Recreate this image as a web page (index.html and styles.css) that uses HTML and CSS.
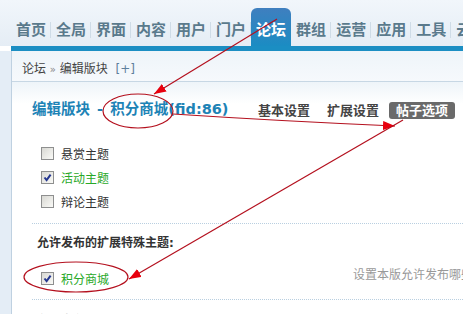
FILE: index.html
```html
<!DOCTYPE html>
<html lang="zh-CN">
<head>
  <meta charset="UTF-8" />
  <title>编辑版块 - 积分商城</title>
  <link rel="stylesheet" href="styles.css">
</head>
<body>
  <div class="page">
    <header class="top">
      <ul class="nav">
        <li><a>首页</a></li>
        <li><a>全局</a></li>
        <li><a>界面</a></li>
        <li><a>内容</a></li>
        <li><a>用户</a></li>
        <li><a>门户</a></li>
        <li class="on"><a>论坛</a></li>
        <li><a>群组</a></li>
        <li><a>运营</a></li>
        <li><a>应用</a></li>
        <li><a>工具</a></li>
        <li><a>云平台</a></li>
      </ul>
    </header>
    <div class="bar"></div>
    <div class="layout">
      <aside class="side"></aside>
      <main class="main">
        <div class="crumb">论坛 <em>»</em> 编辑版块 <span class="plus">[+]</span></div>
        <div class="content">
          <div class="head">
            <h3>编辑版块 <span class="dash">-</span> 积分商城(fid:86)</h3>
            <ul class="tabs">
              <li>基本设置</li>
              <li>扩展设置</li>
              <li class="cur">帖子选项</li>
            </ul>
          </div>
          <ul class="checks">
            <li><span class="box"></span>悬赏主题</li>
            <li class="checked"><span class="box"><svg viewBox="0 0 11 11"><path d="M2.5 5.5 L4.6 8.2 L8.6 2.6"/></svg></span>活动主题</li>
            <li><span class="box"></span>辩论主题</li>
          </ul>
          <div class="sect">
            <h4>允许发布的扩展特殊主题:</h4>
            <div class="opt checked"><span class="box"><svg viewBox="0 0 11 11"><path d="M2.5 5.5 L4.6 8.2 L8.6 2.6"/></svg></span>积分商城</div>
            <p class="tip">设置本版允许发布哪些扩展特殊主题</p>
          </div>
          <div class="sect next">
            <h4>允许发布的特殊主题默认:</h4>
          </div>
        </div>
      </main>
    </div>
    <!-- red annotations drawn over the screenshot -->
    <svg class="marks" width="463" height="314" viewBox="0 0 463 314">
      <defs>
        <marker id="arrow" markerUnits="userSpaceOnUse" markerWidth="13" markerHeight="9" refX="12" refY="4.5" orient="auto">
          <path d="M0,0 L12,4.5 L0,9 z" fill="#e8000e"/>
        </marker>
      </defs>
      <path d="M277,19 L154,94" marker-end="url(#arrow)"/>
      <ellipse cx="138" cy="111" rx="35" ry="17"/>
      <path d="M173,114 Q280,121 395,126" marker-end="url(#arrow)"/>
      <path d="M403,120 L129,279" marker-end="url(#arrow)"/>
      <ellipse cx="76" cy="277" rx="52" ry="15"/>
    </svg>
  </div>
</body>
</html>
```
FILE: styles.css
```css
body {
  margin: 0;
  font-family: "DejaVu Sans", "Noto Sans CJK SC", sans-serif;
  font-size: 12px;
  color: #333;
}
.page {
  position: relative;
  width: 463px;
  height: 314px;
  overflow: hidden;
  background: #fff;
}
.top {
  height: 46px;
  background: linear-gradient(#f1f6fb, #e5edf5);
  overflow: hidden;
}
.nav {
  display: flex;
  margin: 0;
  padding: 8px 0 0 11px;
  list-style: none;
  white-space: nowrap;
}
.nav li {
  display: flex;
  align-items: center;
  flex: none;
  height: 33px;
  padding-top: 5px;
}
.nav a {
  padding: 0 4px 0 5px;
  border-right: 1px solid #cfdce7;
  line-height: 16px;
  font-size: 15px;
  font-weight: bold;
  color: #5a7a8c;
}
.nav li.on {
  background: linear-gradient(#3f7fbf, #1b8cc3);
  border-radius: 6px 6px 0 0;
}
.nav li.on a {
  border-right: 0;
  padding-right: 5px;
  color: #fff;
}
.bar {
  height: 5px;
  margin-left: 11px;
  background: #1b8ec3;
}
.layout {
  display: flex;
  height: 263px;
}
.side {
  flex: none;
  width: 11px;
  background: #e4edf6;
  border-right: 1px solid #bfd1e1;
}
.main {
  flex: 1;
  min-width: 0;
}
.crumb {
  height: 31px;
  box-sizing: border-box;
  padding: 5px 0 0 10px;
  line-height: 26px;
  background: linear-gradient(#eef4f9, #f6f9fc);
  border-bottom: 1px solid #c7d7e4;
  color: #444;
}
.crumb em {
  font-style: normal;
  color: #888;
  font-size: 10px;
}
.crumb .plus {
  margin-left: 4px;
  color: #5d7f9c;
}
.content {
  padding-left: 20px;
  background: linear-gradient(#eef4f9, #fff 22px);
}
.head {
  display: flex;
  justify-content: space-between;
  align-items: center;
  padding: 17px 8px 0 0;
}
.head h3 {
  margin: 0;
  font-size: 14.5px;
  line-height: 20px;
  color: #1d83b6;
  white-space: nowrap;
}
.head .dash {
  margin: 0 2px;
}
.tabs {
  display: flex;
  flex: none;
  margin: 2px 0 0;
  padding: 0;
  list-style: none;
}
.tabs li {
  margin-left: 3px;
  padding: 0 7px;
  line-height: 17px;
  font-size: 13px;
  font-weight: bold;
  color: #444;
}
.tabs li.cur {
  background: #6a6a6a;
  color: #fff;
  border-radius: 3px;
}
.checks {
  margin: 22px 0 0 9px;
  padding: 0 0 10px;
  list-style: none;
}
.checks li, .opt {
  display: flex;
  align-items: center;
  height: 24px;
}
.box {
  flex: none;
  width: 11px;
  height: 11px;
  margin-right: 7px;
  border: 1px solid #8e8f8f;
  background: linear-gradient(135deg, #d8d8d3, #fafaf7);
}
.box svg {
  display: block;
  width: 11px;
  height: 11px;
}
.box path {
  fill: none;
  stroke: #25378f;
  stroke-width: 2;
}
.checked {
  color: #28a828;
}
.sect {
  display: grid;
  grid-template-columns: 316px auto;
  padding: 9px 0 9px 5px;
  border-top: 1px dotted #b9cfe0;
}
.sect h4 {
  grid-column: 1;
  margin: 0;
  font-size: 12px;
  line-height: 20px;
  color: #333;
}
.opt {
  grid-column: 1;
  margin: 13px 0 0 4px;
}
.tip {
  grid-column: 2;
  grid-row: 2;
  margin: 13px 0 0;
  line-height: 18px;
  color: #999;
  white-space: nowrap;
}
.sect.next {
  padding-top: 11px;
}
.marks {
  position: absolute;
  top: 0;
  left: 0;
  pointer-events: none;
}
.marks path, .marks ellipse {
  fill: none;
  stroke: #b4101e;
  stroke-width: 1.2;
}
.marks marker path {
  fill: #e8000e;
  stroke: none;
}
```
